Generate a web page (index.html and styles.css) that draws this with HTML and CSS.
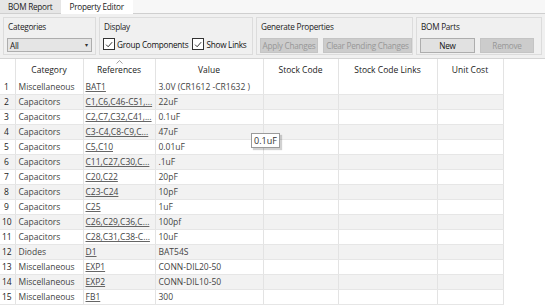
FILE: index.html
```html
<!DOCTYPE html>
<html>
<head>
<meta charset="utf-8">
<link rel="stylesheet" href="styles.css">
</head>
<body>
<div class="app">
  <div class="tabs">
    <div class="tab">BOM Report</div>
    <div class="tab active">Property Editor</div>
    <div class="tab-fill"></div>
  </div>
  <div class="toolbar">
    <div class="group g-cat">
      <div class="glabel">Categories</div>
      <div class="gbody">
        <div class="select"><span>All</span><span class="arrow">&#9662;</span></div>
      </div>
    </div>
    <div class="group g-disp">
      <div class="glabel">Display</div>
      <div class="gbody">
        <label class="check"><span class="box"><svg viewBox="0 0 12 12" width="11" height="11"><path d="M2.5 6.2 L5 8.7 L9.8 3.2" fill="none" stroke="#222" stroke-width="1.1"/></svg></span>Group Components</label>
        <label class="check"><span class="box"><svg viewBox="0 0 12 12" width="11" height="11"><path d="M2.5 6.2 L5 8.7 L9.8 3.2" fill="none" stroke="#222" stroke-width="1.1"/></svg></span>Show Links</label>
      </div>
    </div>
    <div class="group g-gen">
      <div class="glabel">Generate Properties</div>
      <div class="gbody">
        <div class="btn disabled b-apply">Apply Changes</div>
        <div class="btn disabled b-clear">Clear Pending Changes</div>
      </div>
    </div>
    <div class="group g-bom">
      <div class="glabel">BOM Parts</div>
      <div class="gbody">
        <div class="btn b-new">New</div>
        <div class="btn disabled b-rem">Remove</div>
      </div>
    </div>
  </div>
  <div class="gridwrap">
    <table class="grid">
      <colgroup>
        <col class="c-num"><col class="c-cat"><col class="c-ref"><col class="c-val"><col class="c-sc"><col class="c-scl"><col class="c-uc"><col class="c-rest">
      </colgroup>
      <thead>
        <tr>
          <th></th><th>Category</th><th class="sorted"><svg class="caret" viewBox="0 0 7 4" width="7" height="4"><path d="M0.5 3.5 L3.5 0.6 L6.5 3.5" fill="none" stroke="#888" stroke-width="0.8"/></svg>References</th><th>Value</th><th>Stock Code</th><th>Stock Code Links</th><th>Unit Cost</th><th class="rest"></th>
        </tr>
      </thead>
      <tbody>
        <tr><td class="n">1</td><td>Miscellaneous</td><td class="ref">BAT1</td><td>3.0V (CR1612 -CR1632 )</td><td></td><td></td><td></td><td class="rest"></td></tr>
        <tr><td class="n">2</td><td>Capacitors</td><td class="ref">C1,C6,C46-C51,...</td><td>22uF</td><td></td><td></td><td></td><td class="rest"></td></tr>
        <tr><td class="n">3</td><td>Capacitors</td><td class="ref">C2,C7,C32,C41,...</td><td>0.1uF</td><td></td><td></td><td></td><td class="rest"></td></tr>
        <tr><td class="n">4</td><td>Capacitors</td><td class="ref">C3-C4,C8-C9,C...</td><td>47uF</td><td></td><td></td><td></td><td class="rest"></td></tr>
        <tr><td class="n">5</td><td>Capacitors</td><td class="ref">C5,C10</td><td>0.01uF</td><td></td><td></td><td></td><td class="rest"></td></tr>
        <tr><td class="n">6</td><td>Capacitors</td><td class="ref">C11,C27,C30,C...</td><td>.1uF</td><td></td><td></td><td></td><td class="rest"></td></tr>
        <tr><td class="n">7</td><td>Capacitors</td><td class="ref">C20,C22</td><td>20pF</td><td></td><td></td><td></td><td class="rest"></td></tr>
        <tr><td class="n">8</td><td>Capacitors</td><td class="ref">C23-C24</td><td>10pF</td><td></td><td></td><td></td><td class="rest"></td></tr>
        <tr><td class="n">9</td><td>Capacitors</td><td class="ref">C25</td><td>1uF</td><td></td><td></td><td></td><td class="rest"></td></tr>
        <tr><td class="n">10</td><td>Capacitors</td><td class="ref">C26,C29,C36,C...</td><td>100pf</td><td></td><td></td><td></td><td class="rest"></td></tr>
        <tr><td class="n">11</td><td>Capacitors</td><td class="ref">C28,C31,C38-C...</td><td>10uF</td><td></td><td></td><td></td><td class="rest"></td></tr>
        <tr><td class="n">12</td><td>Diodes</td><td class="ref">D1</td><td>BAT54S</td><td></td><td></td><td></td><td class="rest"></td></tr>
        <tr><td class="n">13</td><td>Miscellaneous</td><td class="ref">EXP1</td><td>CONN-DIL20-50</td><td></td><td></td><td></td><td class="rest"></td></tr>
        <tr><td class="n">14</td><td>Miscellaneous</td><td class="ref">EXP2</td><td>CONN-DIL10-50</td><td></td><td></td><td></td><td class="rest"></td></tr>
        <tr><td class="n">15</td><td>Miscellaneous</td><td class="ref">FB1</td><td>300</td><td></td><td></td><td></td><td class="rest"></td></tr>
      </tbody>
    </table>
    <div class="tooltip">0.1uF</div>
  </div>
</div>
</body>
</html>
```
FILE: styles.css
```css
html, body {
  margin: 0;
  padding: 0;
  background: #ffffff;
}
.app {
  width: 545px;
  height: 305px;
  overflow: hidden;
  font-family: "Open Sans", "Noto Sans", sans-serif;
  font-size: 8.5px;
  color: #333;
  display: flex;
  flex-direction: column;
}
.tabs {
  display: flex;
  height: 14px;
  background: #f7f7f7;
  font-size: 8.2px;
  letter-spacing: -0.25px;
}
.tab {
  padding: 0 8px 0 8px;
  line-height: 13px;
  background: #e6e6e6;
  border-bottom: 1px solid #cfcfcf;
  color: #222;
  white-space: nowrap;
}
.tab.active {
  background: #ffffff;
  border-bottom: 1px solid #ffffff;
  padding: 0 9px 0 9px;
}
.tab-fill {
  flex: 1;
  border-bottom: 1px solid #cfcfcf;
}
.toolbar {
  height: 48px;
  background: #f0f0f0;
  border-bottom: 1px solid #d4d4d4;
  display: flex;
  gap: 3px;
  padding: 3px 3px 3px 3px;
  box-sizing: border-box;
  white-space: nowrap;
  font-size: 8.2px;
  letter-spacing: -0.25px;
}
.group {
  border: 1px solid #dcdcdc;
  background: #f0f0f0;
  display: flex;
  flex-direction: column;
  padding: 2px 3px 0 3px;
  box-sizing: border-box;
}
.glabel {
  line-height: 13px;
  color: #222;
  padding-left: 1px;
}
.gbody {
  display: flex;
  align-items: center;
  gap: 5px;
  margin-top: 5px;
}
.g-cat { width: 93px; }
.g-disp { width: 154px; }
.g-disp .gbody { gap: 4px; }
.g-gen { width: 157px; }
.g-bom { flex: 1; }
.select {
  width: 86px;
  height: 14px;
  box-sizing: border-box;
  background: #e5e5e5;
  border: 1px solid #adadad;
  display: flex;
  justify-content: space-between;
  align-items: center;
  padding: 0 3px 0 2px;
  color: #111;
}
.arrow { font-size: 6px; color: #333; }
.check {
  display: flex;
  align-items: center;
  gap: 2px;
  color: #111;
  white-space: nowrap;
}
.box {
  width: 12px;
  height: 12px;
  flex: none;
  box-sizing: border-box;
  border: 1px solid #333;
  background: #fff;
  display: flex;
  align-items: center;
  justify-content: center;
}
.box svg { display: block; }
.btn {
  height: 15px;
  flex: none;
  box-sizing: border-box;
  display: flex;
  align-items: center;
  justify-content: center;
  background: #e1e1e1;
  border: 1px solid #adadad;
  color: #111;
  white-space: nowrap;
}
.btn.disabled {
  background: #cccccc;
  border-color: #c4c4c4;
  color: #979797;
}
.b-apply { width: 58px; }
.b-clear { width: 89px; }
.b-new { width: 55px; }
.b-rem { width: 54px; }
.gridwrap {
  position: relative;
  flex: 1;
  background: #fff;
}
.grid {
  border-collapse: collapse;
  table-layout: fixed;
  width: 545px;
}
.c-num { width: 15px; }
.c-cat { width: 68px; }
.c-ref { width: 72px; }
.c-val { width: 108px; }
.c-sc { width: 75px; }
.c-scl { width: 99px; }
.c-uc { width: 66px; }
.c-rest { width: 42px; }
.grid th {
  height: 21px;
  font-weight: normal;
  color: #222;
  border-right: 1px solid #e3e3e3;
  padding: 0;
  position: relative;
  text-align: center;
  vertical-align: middle;
}
.grid th.rest, .grid td.rest { border-right: none; }
.caret {
  position: absolute;
  left: 50%;
  top: 1px;
  margin-left: -3px;
}
.grid td {
  height: 14px;
  padding: 0 0 0 3px;
  border-right: 1px solid #e3e3e3;
  border-bottom: 1px solid #e6e6e6;
  white-space: nowrap;
  overflow: hidden;
  color: #444;
  line-height: 14px;
}
.grid td.n { padding-left: 4px; color: #222; }
.grid tbody tr:nth-child(n+10) td.n { padding-left: 2px; }
.grid td.ref {
  text-decoration: underline;
  text-decoration-color: #666;
  padding-left: 2px;
}
.grid tbody tr:nth-child(even) td { background: #f2f2f2; }
.grid tbody tr td.rest { background: #fff !important; border-bottom: none; }
.tooltip {
  position: absolute;
  left: 251px;
  top: 74px;
  width: 29px;
  height: 15px;
  box-sizing: border-box;
  background: #fff;
  border: 1px solid #9a9a9a;
  box-shadow: 2px 2px 1px rgba(0,0,0,0.18);
  font-size: 9px;
  line-height: 13px;
  padding-left: 2px;
  color: #333;
}
```
